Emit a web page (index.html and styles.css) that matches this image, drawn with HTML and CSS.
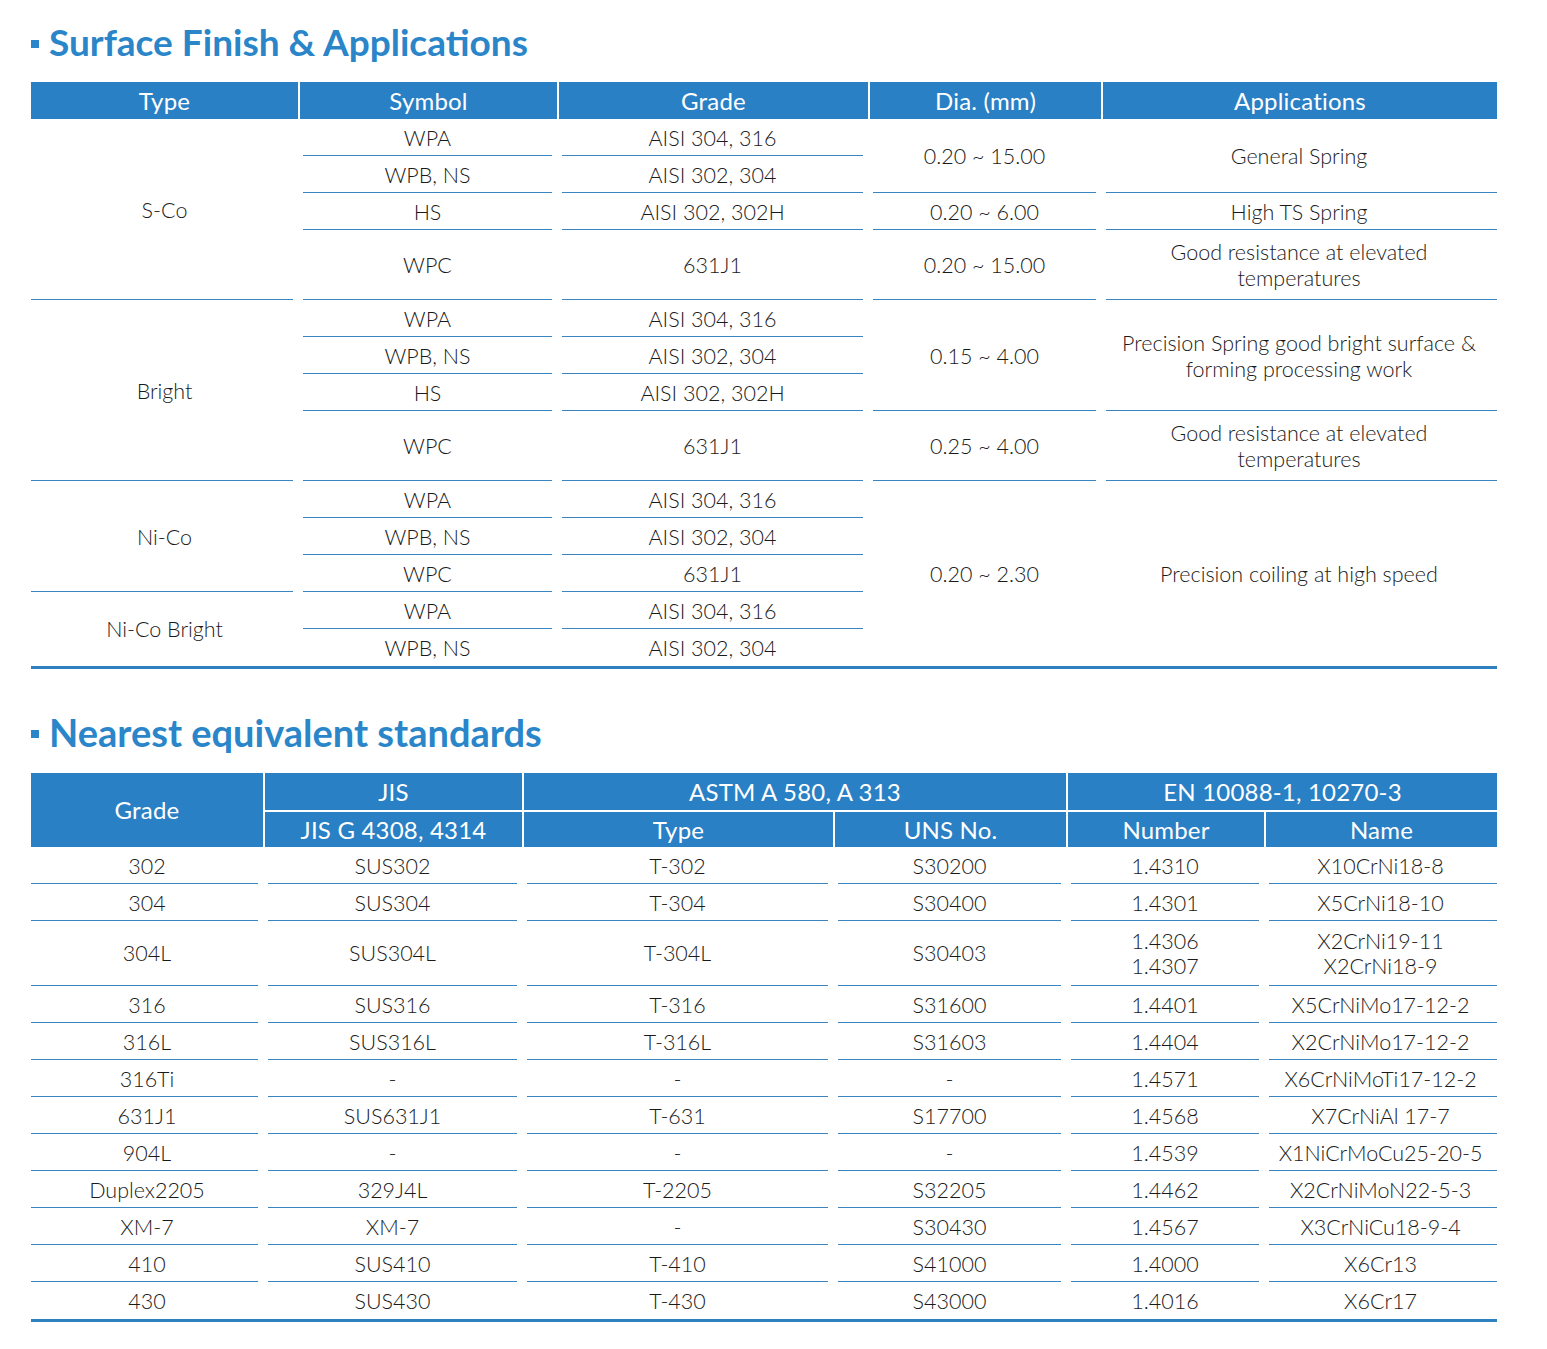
FILE: index.html
```html
<!DOCTYPE html>
<html lang="en">
<head>
<meta charset="utf-8">
<title>Surface Finish &amp; Applications</title>
<link rel="stylesheet" href="styles.css">
</head>
<body>
<main class="page">
  <h2 class="title"><span class="bullet"></span>Surface Finish &amp; Applications</h2>
  <table class="tbl t1">
    <colgroup><col class="c267"><col class="c259"><col class="c311"><col class="c233"><col class="c396"></colgroup>
    <thead>
      <tr><th>Type</th><th>Symbol</th><th>Grade</th><th>Dia. (mm)</th><th>Applications</th></tr>
    </thead>
    <tbody>
      <tr><td rowspan="4" class="first">S-Co</td><td>WPA</td><td>AISI 304, 316</td><td rowspan="2">0.20 ~ 15.00</td><td rowspan="2" class="last">General Spring</td></tr>
      <tr><td>WPB, NS</td><td>AISI 302, 304</td></tr>
      <tr><td>HS</td><td>AISI 302, 302H</td><td>0.20 ~ 6.00</td><td class="last">High TS Spring</td></tr>
      <tr class="tall"><td>WPC</td><td>631J1</td><td>0.20 ~ 15.00</td><td class="last">Good resistance at elevated<br>temperatures</td></tr>
      <tr><td rowspan="4" class="first">Bright</td><td>WPA</td><td>AISI 304, 316</td><td rowspan="3">0.15 ~ 4.00</td><td rowspan="3" class="last">Precision Spring good bright surface &amp;<br>forming processing work</td></tr>
      <tr><td>WPB, NS</td><td>AISI 302, 304</td></tr>
      <tr><td>HS</td><td>AISI 302, 302H</td></tr>
      <tr class="tall"><td>WPC</td><td>631J1</td><td>0.25 ~ 4.00</td><td class="last">Good resistance at elevated<br>temperatures</td></tr>
      <tr><td rowspan="3" class="first">Ni-Co</td><td>WPA</td><td>AISI 304, 316</td><td rowspan="5" class="nl">0.20 ~ 2.30</td><td rowspan="5" class="last nl">Precision coiling at high speed</td></tr>
      <tr><td>WPB, NS</td><td>AISI 302, 304</td></tr>
      <tr><td>WPC</td><td>631J1</td></tr>
      <tr><td rowspan="2" class="first nl">Ni-Co Bright</td><td>WPA</td><td>AISI 304, 316</td></tr>
      <tr><td class="nl">WPB, NS</td><td class="nl">AISI 302, 304</td></tr>
    </tbody>
  </table>

  <h2 class="title second"><span class="bullet"></span>Nearest equivalent standards</h2>
  <table class="tbl t2">
    <colgroup><col class="c232"><col class="c259"><col class="c311"><col class="c233"><col class="c198"><col class="c233"></colgroup>
    <thead>
      <tr><th rowspan="2">Grade</th><th>JIS</th><th colspan="2">ASTM A 580, A 313</th><th colspan="2">EN 10088-1, 10270-3</th></tr>
      <tr><th class="sub">JIS G 4308, 4314</th><th class="sub">Type</th><th class="sub">UNS No.</th><th class="sub">Number</th><th class="sub">Name</th></tr>
    </thead>
    <tbody>
      <tr><td class="first">302</td><td>SUS302</td><td>T-302</td><td>S30200</td><td>1.4310</td><td class="last">X10CrNi18-8</td></tr>
      <tr><td class="first">304</td><td>SUS304</td><td>T-304</td><td>S30400</td><td>1.4301</td><td class="last">X5CrNi18-10</td></tr>
      <tr class="tall2"><td class="first">304L</td><td>SUS304L</td><td>T-304L</td><td>S30403</td><td>1.4306<br>1.4307</td><td class="last">X2CrNi19-11<br>X2CrNi18-9</td></tr>
      <tr><td class="first">316</td><td>SUS316</td><td>T-316</td><td>S31600</td><td>1.4401</td><td class="last">X5CrNiMo17-12-2</td></tr>
      <tr><td class="first">316L</td><td>SUS316L</td><td>T-316L</td><td>S31603</td><td>1.4404</td><td class="last">X2CrNiMo17-12-2</td></tr>
      <tr><td class="first">316Ti</td><td>-</td><td>-</td><td>-</td><td>1.4571</td><td class="last">X6CrNiMoTi17-12-2</td></tr>
      <tr><td class="first">631J1</td><td>SUS631J1</td><td>T-631</td><td>S17700</td><td>1.4568</td><td class="last">X7CrNiAl 17-7</td></tr>
      <tr><td class="first">904L</td><td>-</td><td>-</td><td>-</td><td>1.4539</td><td class="last">X1NiCrMoCu25-20-5</td></tr>
      <tr><td class="first">Duplex2205</td><td>329J4L</td><td>T-2205</td><td>S32205</td><td>1.4462</td><td class="last">X2CrNiMoN22-5-3</td></tr>
      <tr><td class="first">XM-7</td><td>XM-7</td><td>-</td><td>S30430</td><td>1.4567</td><td class="last">X3CrNiCu18-9-4</td></tr>
      <tr><td class="first">410</td><td>SUS410</td><td>T-410</td><td>S41000</td><td>1.4000</td><td class="last">X6Cr13</td></tr>
      <tr class="end"><td class="first">430</td><td>SUS430</td><td>T-430</td><td>S43000</td><td>1.4016</td><td class="last">X6Cr17</td></tr>
    </tbody>
  </table>
</main>
</body>
</html>
```

FILE: styles.css
```css
html, body {
  margin: 0;
  padding: 0;
  background: #ffffff;
}

.page {
  padding: 0 50px 0 31px;
  font-family: Lato, "Open Sans", "Liberation Sans", sans-serif;
  color: #1a1a1a;
}

.title {
  display: flex;
  align-items: center;
  gap: 10px;
  margin: 0;
  padding-top: 2px;
  height: 82px;
  box-sizing: border-box;
  font-size: 37px;
  font-weight: 700;
  line-height: 42px;
  color: #2a86c9;
}

.title.second {
  height: 104px;
  padding-top: 22px;
  font-size: 38px;
}

.bullet {
  width: 8px;
  height: 8px;
  background: #2a86c9;
  flex: none;
  margin-top: 4px;
}

.tbl {
  width: 1466px;
  table-layout: fixed;
  border-collapse: separate;
  border-spacing: 0;
  border-bottom: 3px solid #2f80bf;
}

.c267 { width: 267px; }
.c259 { width: 259px; }
.c311 { width: 311px; }
.c233 { width: 233px; }
.c396 { width: 396px; }
.c232 { width: 232px; }
.c198 { width: 198px; }

.tbl th {
  background: #2a80c4;
  color: #ffffff;
  font-weight: 400;
  font-size: 24px;
  letter-spacing: 0.2px;
  height: 37px;
  padding: 0;
  line-height: 26px;
  border-left: 2px solid #ffffff;
  box-sizing: border-box;
}

.tbl th:first-child {
  border-left: none;
}

.tbl th.sub {
  border-top: 2px solid #ffffff;
}

.t2 th.sub:first-child {
  border-left: 2px solid #ffffff;
}

.tbl td {
  height: 37px;
  padding: 0 5px;
  font-size: 21.5px;
  font-weight: 300;
  line-height: 26px;
  text-align: center;
  vertical-align: middle;
  box-sizing: border-box;
  background-image: linear-gradient(#3a84c0, #3a84c0);
  background-repeat: no-repeat;
  background-size: calc(100% - 10px) 1.5px;
  background-position: 5px 100%;
}

.tbl td.first {
  background-size: calc(100% - 5px) 1.5px;
  background-position: 0 100%;
}

.tbl td.last {
  background-size: calc(100% - 5px) 1.5px;
  background-position: 5px 100%;
}

.tbl td.nl,
.t2 tr.end td {
  background-image: none;
}

.t1 tr.tall td {
  height: 70px;
}

.t2 tr.tall2 td {
  height: 65px;
  line-height: 25px;
}
```
